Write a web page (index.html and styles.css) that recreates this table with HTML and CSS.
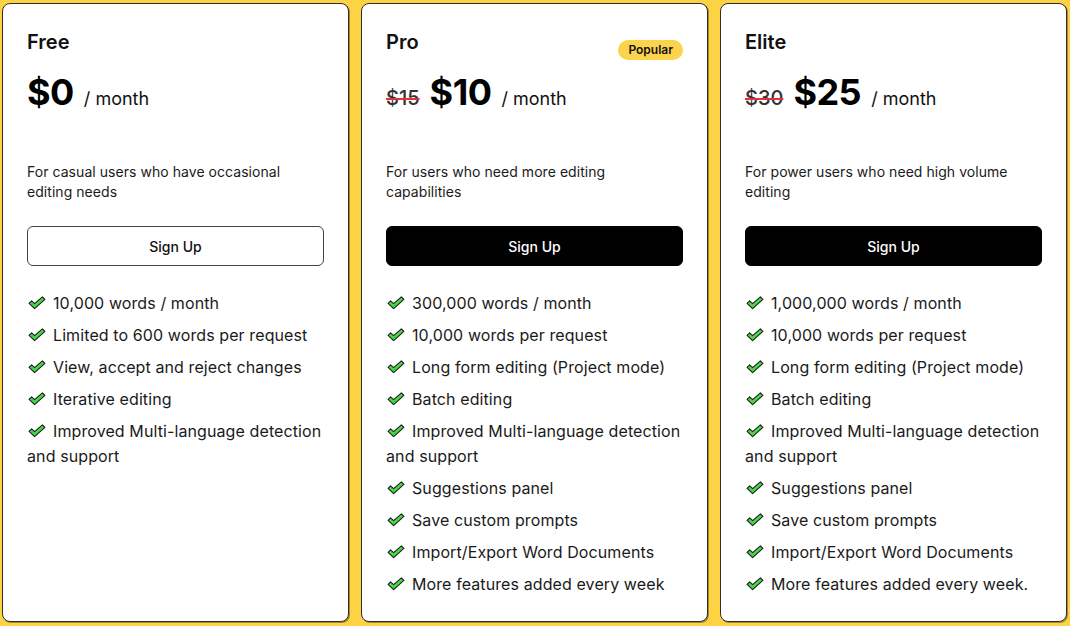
FILE: index.html
```html
<!DOCTYPE html>
<html lang="en">
<head>
<meta charset="utf-8">
<title>Pricing</title>
<link rel="stylesheet" href="styles.css">
</head>
<body>
<svg width="0" height="0" class="defs" aria-hidden="true">
  <defs>
    <symbol id="chk" viewBox="0 0 18 14">
      <path d="M1.1 7.4 L3.6 4.9 L6.6 7.7 L14.4 0.9 L16.9 3.3 L6.6 12.7 Z" fill="#48d848" stroke="#1c1c1c" stroke-width="1.1" stroke-linejoin="round"/>
    </symbol>
  </defs>
</svg>
<main class="plans">
  <section class="card">
    <div class="head"><h2 class="name">Free</h2></div>
    <div class="price-row"><span class="price">$0</span><span class="per">/ month</span></div>
    <p class="desc">For casual users who have occasional editing needs</p>
    <button class="btn btn-outline">Sign Up</button>
    <ul class="features">
      <li><svg class="check"><use href="#chk"/></svg>10,000 words / month</li>
      <li><svg class="check"><use href="#chk"/></svg>Limited to 600 words per request</li>
      <li><svg class="check"><use href="#chk"/></svg>View, accept and reject changes</li>
      <li><svg class="check"><use href="#chk"/></svg>Iterative editing</li>
      <li><svg class="check"><use href="#chk"/></svg>Improved Multi-language detection and support</li>
    </ul>
  </section>
  <section class="card">
    <div class="head"><h2 class="name">Pro</h2><span class="badge">Popular</span></div>
    <div class="price-row"><span class="old">$15</span><span class="price">$10</span><span class="per">/ month</span></div>
    <p class="desc">For users who need more editing capabilities</p>
    <button class="btn btn-solid">Sign Up</button>
    <ul class="features">
      <li><svg class="check"><use href="#chk"/></svg>300,000 words / month</li>
      <li><svg class="check"><use href="#chk"/></svg>10,000 words per request</li>
      <li><svg class="check"><use href="#chk"/></svg>Long form editing (Project mode)</li>
      <li><svg class="check"><use href="#chk"/></svg>Batch editing</li>
      <li><svg class="check"><use href="#chk"/></svg>Improved Multi-language detection and support</li>
      <li><svg class="check"><use href="#chk"/></svg>Suggestions panel</li>
      <li><svg class="check"><use href="#chk"/></svg>Save custom prompts</li>
      <li><svg class="check"><use href="#chk"/></svg>Import/Export Word Documents</li>
      <li><svg class="check"><use href="#chk"/></svg>More features added every week</li>
    </ul>
  </section>
  <section class="card">
    <div class="head"><h2 class="name">Elite</h2></div>
    <div class="price-row"><span class="old">$30</span><span class="price">$25</span><span class="per">/ month</span></div>
    <p class="desc">For power users who need high volume editing</p>
    <button class="btn btn-solid">Sign Up</button>
    <ul class="features">
      <li><svg class="check"><use href="#chk"/></svg>1,000,000 words / month</li>
      <li><svg class="check"><use href="#chk"/></svg>10,000 words per request</li>
      <li><svg class="check"><use href="#chk"/></svg>Long form editing (Project mode)</li>
      <li><svg class="check"><use href="#chk"/></svg>Batch editing</li>
      <li><svg class="check"><use href="#chk"/></svg>Improved Multi-language detection and support</li>
      <li><svg class="check"><use href="#chk"/></svg>Suggestions panel</li>
      <li><svg class="check"><use href="#chk"/></svg>Save custom prompts</li>
      <li><svg class="check"><use href="#chk"/></svg>Import/Export Word Documents</li>
      <li><svg class="check"><use href="#chk"/></svg>More features added every week.</li>
    </ul>
  </section>
</main>
</body>
</html>
```
FILE: styles.css
```css
* { box-sizing: border-box; }
html, body { margin: 0; height: 100%; }
body {
  background: #fdd343;
  font-family: Inter, "Noto Sans", "Liberation Sans", sans-serif;
  color: #111;
  padding: 3px 3px 4px 2px;
}
.defs { position: absolute; width: 0; height: 0; }
.plans {
  display: grid;
  grid-template-columns: 347px 347px 347px;
  column-gap: 12px;
  height: 619px;
}
.card {
  background: #fff;
  border: 1px solid #2e2e2e;
  border-radius: 8px;
  padding: 24px;
  display: flex;
  flex-direction: column;
  box-shadow: 1px 1px 0 rgba(0,0,0,0.35);
}
.head {
  display: flex;
  justify-content: space-between;
  align-items: flex-start;
  height: 28px;
}
.name {
  margin: 0;
  font-size: 20px;
  line-height: 28px;
  font-weight: 600;
  color: #111;
}
.badge {
  margin-top: 12px;
  background: #fcd34d;
  color: #111;
  font-size: 12px;
  font-weight: 600;
  line-height: 20px;
  padding: 0 10px;
  border-radius: 10px;
  height: 20px;
}
.price-row {
  margin-top: 16px;
  display: flex;
  align-items: baseline;
  gap: 10px;
  height: 40px;
  line-height: 40px;
}
.price {
  font-size: 36px;
  font-weight: 700;
  color: #000;
  letter-spacing: -0.5px;
}
.old {
  font-size: 20px;
  font-weight: 500;
  color: #333;
  text-decoration: line-through;
  text-decoration-color: #e0323c;
  text-decoration-thickness: 2px;
}
.per {
  font-size: 18px;
  color: #111;
}
.desc {
  margin: 50px 0 0;
  font-size: 14px;
  line-height: 20px;
  color: #1a1a1a;
  min-height: 40px;
  max-width: 280px;
  letter-spacing: 0.05px;
}
.btn {
  margin-top: 24px;
  height: 40px;
  border-radius: 6px;
  font-family: inherit;
  font-size: 14px;
  font-weight: 500;
  cursor: pointer;
}
.btn-outline {
  background: #fff;
  color: #111;
  border: 1px solid #444;
}
.btn-solid {
  background: #000;
  color: #fff;
  border: 1px solid #000;
}
.features {
  list-style: none;
  margin: 25px 0 0;
  padding: 0;
  display: flex;
  flex-direction: column;
  gap: 7px;
  font-size: 16px;
  line-height: 25px;
  color: #1a1a1a;
  letter-spacing: 0.1px;
}
.check {
  width: 18px;
  height: 14px;
  margin: 0 7px 0 1px;
  vertical-align: -1px;
}
```
